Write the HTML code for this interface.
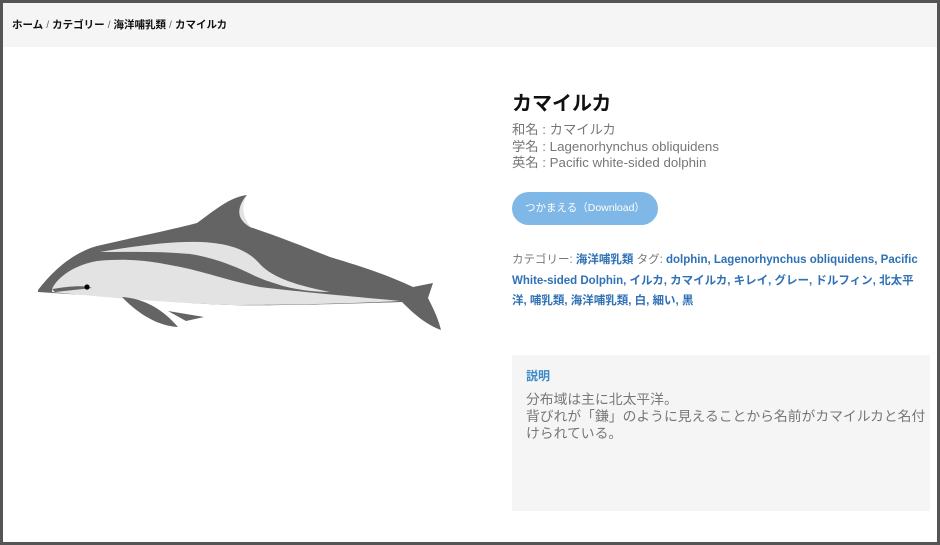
<!DOCTYPE html>
<html><head><meta charset="utf-8"><style>
body{margin:0;width:940px;height:545px;overflow:hidden;background:#fff;font-family:"Liberation Sans","Noto Sans CJK JP",sans-serif}
.frame{position:absolute;left:0;top:0;width:934px;height:539px;border:3px solid #555;}
.bc{position:absolute;left:3px;top:3px;width:934px;height:44px;background:#f5f5f5;font-size:10.5px;font-weight:bold;color:#111;line-height:44px;padding-left:9px;box-sizing:border-box}
.bc span{color:#666;font-weight:normal;margin:0 3px}
h1{position:absolute;left:512px;top:87px;margin:0;font-size:20px;font-weight:bold;color:#111}
.names{position:absolute;left:512px;top:122px;font-size:13.3px;color:#777;line-height:16.5px}
.btn{position:absolute;left:512px;top:192px;width:146px;height:33px;border-radius:17px;background:#7fb7e6;color:#fff;font-size:10.5px;text-align:center;line-height:33px}
.tags{position:absolute;left:512px;top:250px;width:410px;font-size:11.5px;line-height:20.5px;color:#777}
.tags b{color:#2f71b5}
.desc{position:absolute;left:512px;top:355px;width:418px;height:156px;background:#f5f5f5}
.desc .t{position:absolute;left:14px;top:12px;font-size:12px;font-weight:bold;color:#3a8ac9}
.desc .p{position:absolute;left:14px;top:36px;width:400px;font-size:13.8px;color:#777;line-height:17px}
</style></head><body>
<div class="frame"></div>
<div class="bc">ホーム<span>/</span>カテゴリー<span>/</span>海洋哺乳類<span>/</span>カマイルカ</div>
<svg style="position:absolute;left:0;top:0" width="500" height="545">
<path d="M38,290 C55,268 75,252 97,246 C140,236 170,230 197,223 C215,210 230,197 247,195 C238,205 236,218 250,227 C280,237 305,247 330,257 C360,266 385,274 413,287 L433,283 L428,298 C434,310 438,318 441,330 C425,324 414,314 402,302 C340,304 270,306 230,305 C180,303 150,300 130,298 C100,296 70,294 38,292 Z" fill="#646464"/>
<path d="M52,289 C56,280 70,266 97,261 C130,258 150,261 170,265 C200,270 225,280 260,287 C310,293 360,297 400,301 C340,304 270,305 230,305 C180,303 130,300 52,292 Z" fill="#e3e3e3"/>
<path d="M52,289 C70,286 85,285 92,288 L55,292 Z" fill="#646464"/>
<path d="M100,252 C140,245 175,241 200,242 C225,243 245,248 258,262 C270,276 290,284 330,292 C300,292 275,285 255,276 C235,266 215,258 190,254 C160,251 130,252 100,252 Z" fill="#e3e3e3"/>
<path d="M207,270 C235,272 258,278 280,285 C258,284 232,278 207,270 Z" fill="#646464"/>
<path d="M247,195 C236,208 236,220 252,228 C242,218 241,205 247,195 Z" fill="#e3e3e3"/>
<circle cx="87" cy="287" r="2.6" fill="#000"/>
<path d="M122,297 C140,298 160,306 178,327 C158,326 138,314 122,297 Z" fill="#646464"/>
<path d="M168,311 L204,317 L186,321 Z" fill="#646464"/>
</svg>
<h1>カマイルカ</h1>
<div class="names">和名 : カマイルカ<br>学名 : Lagenorhynchus obliquidens<br>英名 : Pacific white-sided dolphin</div>
<div class="btn">つかまえる（Download）</div>
<div class="tags">カテゴリー: <b>海洋哺乳類</b> タグ: <b>dolphin, Lagenorhynchus obliquidens, Pacific White-sided Dolphin, イルカ, カマイルカ, キレイ, グレー, ドルフィン, 北太平洋, 哺乳類, 海洋哺乳類, 白, 細い, 黒</b></div>
<div class="desc"><div class="t">説明</div><div class="p">分布域は主に北太平洋。<br>背びれが「鎌」のように見えることから名前がカマイルカと名付けられている。</div></div>
</body></html>
